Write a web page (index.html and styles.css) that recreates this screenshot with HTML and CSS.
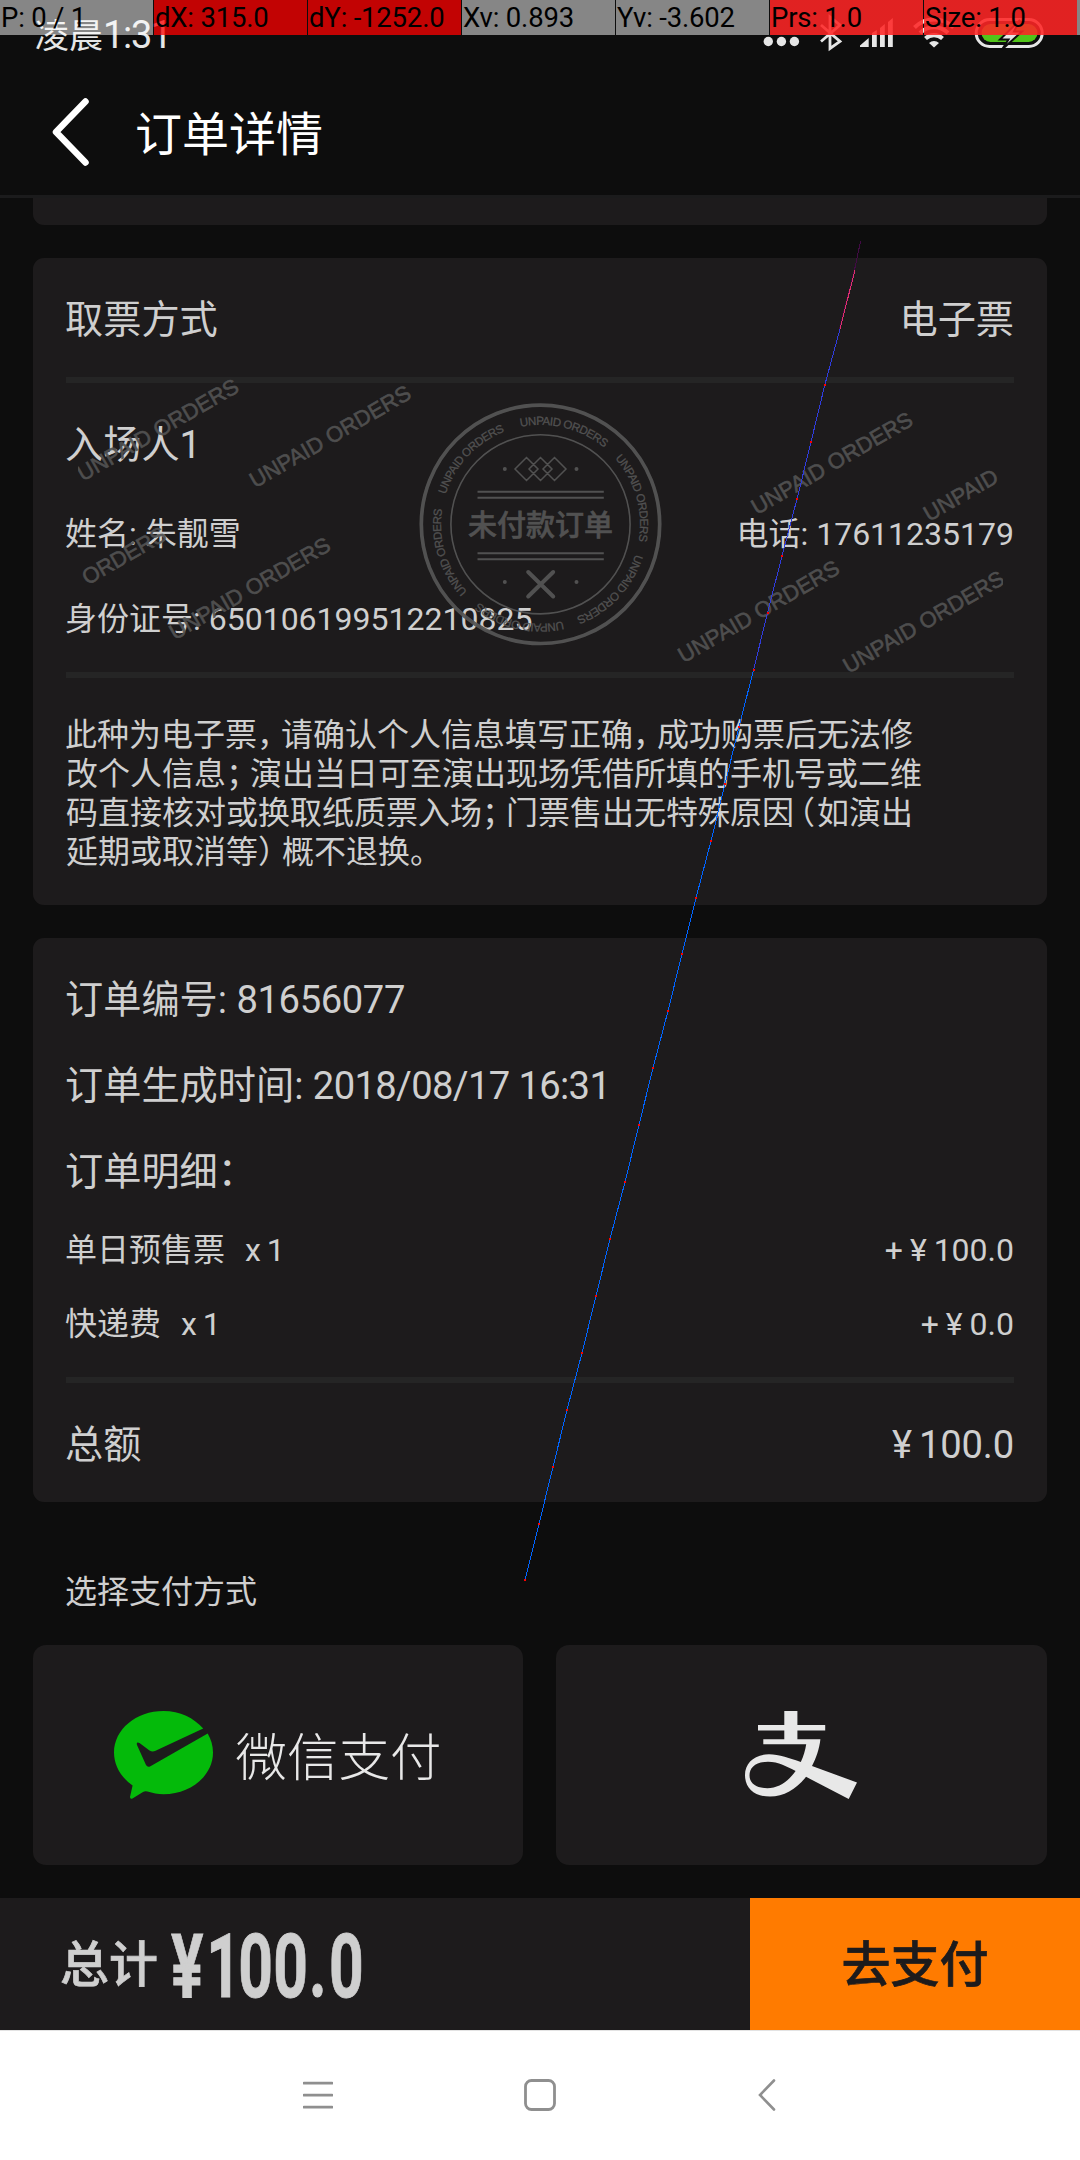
FILE: index.html
```html
<!DOCTYPE html>
<html lang="zh-CN">
<head>
<meta charset="utf-8">
<title>订单详情</title>
<link rel="stylesheet" href="styles.css">
</head>
<body>
<div class="phone">
  <header class="header">
    <div class="status">
      <div class="clock">凌晨<span class="clock-digits">1:31</span></div>
      <svg class="status-icons" width="290" height="60" viewBox="760 0 290 60">
        <g fill="#e6e6e6">
          <circle cx="768.3" cy="41.5" r="4.7"/><circle cx="781.4" cy="41.5" r="4.7"/><circle cx="794.4" cy="41.5" r="4.7"/>
          <path d="M860 47V45.500L868.700 38V47zM872 33l4.800-3V47H872zM880 28l4.800-4V47H880zM888 22l4.800-4V47H888z"/>
          <path d="M934 47.500l-5-4.500a7.500 7.500 0 0 1 10 0z"/>
        </g>
        <g fill="none" stroke="#e6e6e6">
          <path d="M821 25l19 16.500-10 7V17l10 8-19 16.500" stroke-width="2.800"/>
          <path d="M925.500 38.500a12.500 12.500 0 0 1 17 0" stroke-width="4.200"/>
          <path d="M920 33a20 20 0 0 1 28 0M914.500 27.500a28 28 0 0 1 39 0" stroke-width="4"/>
          <rect x="976.200" y="19.500" width="66" height="27" rx="13.500" stroke-width="3"/>
        </g>
        <rect x="981.500" y="24" width="56" height="18" rx="9" fill="#52c41a"/>
        <path d="M1020 20l-20 19.500h8.500l-6.500 10 20-18h-8z" fill="#e6e6e6" stroke="#0d0d0d" stroke-width="2"/>
      </svg>
    </div>
    <div class="titlebar">
      <svg class="back" width="38" height="68" viewBox="0 0 38 68"><path d="M34.500 3.500L5 34l29.500 30.500" fill="none" stroke="#fff" stroke-width="6.500" stroke-linecap="round" stroke-linejoin="round"/></svg>
      <h1 class="title">订单详情</h1>
    </div>
  </header>

  <main class="content">
    <section class="card card-previous"></section>

    <section class="card ticket">
      <div class="row pickup"><span>取票方式</span><span>电子票</span></div>
      <div class="divider"></div>
      <div class="visitor">
        <div class="row visitor-title">入场人1</div>
        <div class="row small name"><span>姓名: 朱靓雪</span><span>电话: 17611235179</span></div>
        <div class="row small idcard">身份证号: 650106199512210825</div>
        <svg class="watermark" width="925" height="300" viewBox="77.500 372 925 300">
          <defs>
            <path id="ring" d="M0-99.500A99.500 99.500 0 0 1 0 99.500A99.500 99.500 0 0 1 0-99.500"/>
          </defs>
          <g class="mark-text">
            <text transform="translate(82.300 481.800) rotate(-30)" textLength="182">UNPAID ORDERS</text>
            <text transform="translate(254.500 488.500) rotate(-30)" textLength="182">UNPAID ORDERS</text>
            <text transform="translate(87 585.500) rotate(-30)" textLength="93">ORDERS</text>
            <text transform="translate(174.200 640.500) rotate(-30)" textLength="182">UNPAID ORDERS</text>
            <text transform="translate(756.300 515.200) rotate(-30)" textLength="182">UNPAID ORDERS</text>
            <text transform="translate(928.500 522) rotate(-30)" textLength="82">UNPAID</text>
            <text transform="translate(683 663.500) rotate(-30)" textLength="182">UNPAID ORDERS</text>
            <text transform="translate(847.900 674) rotate(-30)" textLength="182">UNPAID ORDERS</text>
          </g>
          <g fill="none" stroke="#555">
            <circle cx="540" cy="524.300" r="119.200" stroke-width="3.700"/>
            <circle cx="540" cy="524.300" r="89.600" stroke-width="1.600"/>
            <path d="M477 491.800H603.300M477 497.800H603.300M477 553.300H603.300M477 559.300H603.300" stroke-width="2"/>
            <path d="M526 457.500l11.500 11.500-11.500 11.500-11.500-11.500zM540 457.500l11.500 11.500-11.500 11.500-11.500-11.500zM554 457.500l11.500 11.500-11.500 11.500-11.500-11.500z" stroke-width="1.500"/>
            <path d="M527.700 572l25 24.500M552.700 572l-25 24.500" stroke-width="4" stroke-linecap="round"/>
          </g>
          <g fill="#555">
            <circle cx="504.300" cy="469" r="2"/><circle cx="576" cy="469" r="2"/>
            <circle cx="504.300" cy="582" r="2"/><circle cx="576" cy="582" r="2"/>
          </g>
          <text class="stamp-title" x="540" y="535.500" text-anchor="middle">未付款订单</text>
          <g class="ring-text" transform="translate(540 524.300) rotate(-11.500)">
            <text><textPath href="#ring" textLength="89">UNPAID ORDERS</textPath></text>
            <text transform="rotate(60)"><textPath href="#ring" textLength="89">UNPAID ORDERS</textPath></text>
            <text transform="rotate(119)"><textPath href="#ring" textLength="89">UNPAID ORDERS</textPath></text>
            <text transform="rotate(178.500)"><textPath href="#ring" textLength="89">UNPAID ORDERS</textPath></text>
            <text transform="rotate(239)"><textPath href="#ring" textLength="89">UNPAID ORDERS</textPath></text>
            <text transform="rotate(299)"><textPath href="#ring" textLength="89">UNPAID ORDERS</textPath></text>
          </g>
        </svg>
      </div>
      <div class="divider"></div>
      <p class="notice">此种为电子票<span class="p">，</span>请确认个人信息填写正确<span class="p">，</span>成功购票后无法修<br>改个人信息<span class="p">；</span>演出当日可至演出现场凭借所填的手机号或二维<br>码直接核对或换取纸质票入场<span class="p">；</span>门票售出无特殊原因<span class="open">（</span>如演出<br>延期或取消等<span class="p">）</span>概不退换。</p>
    </section>

    <section class="card order">
      <div class="row order-row"><span>订单编号: <span class="number">81656077</span></span></div>
      <div class="row order-row"><span>订单生成时间: <span class="date">2018/08/17 16:31</span></span></div>
      <div class="row order-row order-items-title">订单明细：</div>
      <div class="row small item"><span>单日预售票<span class="count">x 1</span></span><span class="price">+ ¥ 100.0</span></div>
      <div class="row small item"><span>快递费<span class="count">x 1</span></span><span class="price">+ ¥ 0.0</span></div>
      <div class="divider order-divider"></div>
      <div class="row sum"><span>总额</span><span class="sum-price">¥ 100.0</span></div>
    </section>

    <h2 class="pay-title">选择支付方式</h2>
    <div class="methods">
      <div class="card method">
        <svg width="99" height="88" viewBox="0 0 99 88"><path fill="#04ba0a" d="M89.200 17.600C80 7 66 0 49.500 0C22 0 0 18.600 0 41.500C0 54.500 7 66.500 18.600 74.400L16 86Q16 88.500 18.500 87.500L29 81Q31 80 33.500 80.600C38.500 82.300 44 83.200 49.500 83.200C77 83.200 99 64.500 99 41.500C99 34.800 97 28.300 93.700 22.600L36 55.400Q33.500 56.600 32 54L23 34Q22 30.500 25.500 32L35.500 39.500Q38.200 41 41 40Z"/></svg>
        <span class="wechat-name">微信支付</span>
      </div>
      <div class="card method method-alipay">
        <svg width="112" height="88" viewBox="0 0 112 88"><path fill="#e8e8e8" fill-rule="evenodd" d="M39.300 0H52.400V13.900H80.200V19.500H52.400V28.300H75.400C74.300 38 71 47.500 67 55L112 71.500L103.700 88L61 65.800C52 77.500 39 85.600 25 85.600C9 85.600 0 77 0 64C0 52 9.500 43.300 24 43.300C34 43.300 45 47.500 55.800 51C58.500 45.500 60.300 39.500 61.200 33.300H18.300V28.300H39.300V19.500H13V13.900H39.300ZM50.600 60C42 55.500 33.500 50.700 23 50.700C11 50.700 4.500 56 4.500 64.500C4.500 72.500 11.500 77.200 22.400 77.200C34 77.200 43.500 70 50.600 60Z"/></svg>
      </div>
    </div>
  </main>

  <footer class="paybar">
    <div class="total">
      <span class="total-label">总计</span>
      <svg class="total-amount" width="200" height="80" viewBox="0 0 200 80"><text transform="translate(0 72) scale(.68 1)" x="0 52 99 150.500 203 232.500">¥100.0</text></svg>
    </div>
    <button class="pay">去支付</button>
  </footer>

  <nav class="nav">
    <svg width="30" height="32" viewBox="0 0 30 32"><path d="M1 4.200H29M1 16.200H29M1 28.200H29" stroke="#8f8f8f" stroke-width="2.800" stroke-linecap="round"/></svg>
    <svg width="32" height="32" viewBox="0 0 32 32"><rect x="1.500" y="1.500" width="29" height="29" rx="6" fill="none" stroke="#8f8f8f" stroke-width="2.800"/></svg>
    <svg width="18" height="32" viewBox="0 0 18 32"><path d="M16 1.500L2 16l14 14.500" fill="none" stroke="#8f8f8f" stroke-width="2.600" stroke-linecap="round"/></svg>
  </nav>

  <svg class="trace" width="1080" height="2160" viewBox="0 0 1080 2160" shape-rendering="crispEdges">
    <g fill="none" stroke-width="1">
      <path d="M860.600 241L854.500 270 839.500 329" stroke="#420a45"/>
      <path d="M855 270L840 329" stroke="#e0306e"/>
      <path d="M840 329L824.800 385 811 442 797 499 782 556 767.500 613 753.500 670" stroke="#303cdc"/>
      <path d="M753.500 670L739 727 725 784 711 841 696 898 682 954 668 1011 653 1068 639 1125 625 1182 610 1239 596 1296 582 1353 567 1410 553 1467 539 1524 525 1580" stroke="#0064ff"/>
    </g>
    <path fill="#f00" d="M824 384h2v2h-2zM810 441h2v2h-2zM796 498h2v2h-2zM781 555h2v2h-2zM767 612h2v2h-2zM753 669h2v2h-2zM738 726h2v2h-2zM724 783h2v2h-2zM710 840h2v2h-2zM695 897h2v2h-2zM681 953h2v2h-2zM667 1010h2v2h-2zM652 1067h2v2h-2zM638 1124h2v2h-2zM624 1181h2v2h-2zM609 1238h2v2h-2zM595 1295h2v2h-2zM581 1352h2v2h-2zM566 1409h2v2h-2zM552 1466h2v2h-2zM538 1523h2v2h-2zM524 1579h2v2h-2z"/>
  </svg>
  <div class="pointer-bar">
    <span>P: 0 / 1</span><span class="moved">dX: 315.0</span><span class="moved">dY: -1252.0</span><span>Xv: 0.893</span><span>Yv: -3.602</span><span class="level">Prs: 1.0</span><span class="level">Size: 1.0</span>
  </div>
</div>
</body>
</html>
```
FILE: styles.css
```css
* { box-sizing: border-box; }
body { margin: 0; background: #0d0d0d; }
.phone {
  position: relative;
  width: 1080px;
  height: 2160px;
  overflow: hidden;
  display: flex;
  flex-direction: column;
  background: #0d0d0d;
  color: #cfcfcf;
  font-family: Roboto, "Noto Sans CJK SC", sans-serif;
  font-size: 38.2px;
}
svg { display: block; flex: none; }

.header { height: 198px; border-bottom: 3px solid #1b1b1c; }
.status {
  height: 66px;
  padding: 0 30px 0 35px;
  display: flex;
  justify-content: space-between;
  color: #e6e6e6;
}
.clock { font-size: 34px; line-height: 71px; height: 66px; white-space: nowrap; }
.clock-digits { font-size: 38px; letter-spacing: -1.3px; }
.titlebar {
  height: 129px;
  padding-left: 51px;
  display: flex;
  align-items: flex-start;
  gap: 46px;
}
.back { margin-top: 32px; }
.title { margin: 0; font-size: 47px; font-weight: 400; line-height: 138px; color: #fff; }

.content { padding: 0 33px; height: 1700px; }
.card { background: #1d1b1c; border-radius: 11px; }
.card-previous { height: 27px; border-radius: 0 0 11px 11px; margin-bottom: 33px; }
.row { display: flex; justify-content: space-between; white-space: pre; }
.row > :first-child:not(:only-child), .visitor-title, .idcard, .order-row { text-indent: -1px; }
.small { font-size: 32px; }
.divider { height: 6px; background: #252525; }

.ticket { height: 647px; padding: 0 33px; margin-bottom: 33px; }
.pickup { height: 119px; line-height: 125px; }
.visitor { position: relative; height: 289px; padding-top: 18px; }
.visitor-title { height: 89px; line-height: 89px; }
.name { height: 89px; line-height: 89px; }
.idcard { height: 81px; line-height: 81px; }
.watermark { position: absolute; left: 11.5px; top: -11px; opacity: .94; }
.mark-text { fill: #525252; stroke: #525252; stroke-width: .6px; font: 22px "Liberation Sans", Arial, sans-serif; }
.ring-text { fill: #555; stroke: #555; stroke-width: .3px; font: 11.6px "Liberation Sans", Arial, sans-serif; }
.stamp-title { fill: #555; stroke: #555; stroke-width: .6px; font: 500 29px "Noto Sans CJK SC", sans-serif; }
.notice {
  margin: 0;
  padding-top: 35px;
  font: 32px/39px "Noto Sans CJK SC", sans-serif;
  text-indent: -1px;
  white-space: nowrap;
}
.p { margin: 0 -8px 0 0; }
.open { margin-left: -11px; margin-right: 2px; }

.order { height: 564px; padding: 19px 33px 0; }
.order-row { height: 86px; line-height: 86px; }
.number { letter-spacing: -.4px; }
.date { letter-spacing: -.65px; }
.order-items-title { height: 84px; }
.item { height: 74px; line-height: 74px; }
.count { margin-left: 20px; word-spacing: -2px; }
.price { word-spacing: -1px; }
.sum-price { word-spacing: -2px; letter-spacing: -.2px; }
.order-divider { margin-top: 16px; }
.sum { height: 119px; line-height: 124px; }

.pay-title { margin: 0; padding-left: 32px; height: 143px; font-size: 32px; font-weight: 400; line-height: 180px; }
.methods { display: grid; grid-template-columns: 490px 491px; gap: 33px; height: 220px; }
.method { display: flex; align-items: center; justify-content: center; border-radius: 13px; }
.method-alipay { padding-right: 2px; }
.wechat-name { margin-left: 22px; font: 300 51.5px/80px "Noto Sans CJK SC", sans-serif; color: #e8e8e8; padding-bottom: 3px; }

.paybar { height: 132px; display: flex; background: #1d1b1c; }
.total { flex: 1; display: flex; padding-left: 60px; }
.total-label { width: 111px; font-size: 49px; font-weight: 500; line-height: 136px; -webkit-text-stroke: .7px #cfcfcf; }
.total-amount { margin-top: 27px; }
.total-amount text { font: 700 89px Roboto, sans-serif; fill: #cfcfcf; stroke: #cfcfcf; stroke-width: .8px; }
.pay {
  width: 330px;
  padding: 0;
  border: 0;
  background: #ff7b00;
  color: #1d1b1c;
  font: 500 49px/136px Roboto, "Noto Sans CJK SC", sans-serif;
  -webkit-text-stroke: .7px #1d1b1c;
}
.nav {
  height: 130px;
  padding: 48px 304px 0 303px;
  border-top: 1px solid #e3e3e3;
  background: #fff;
  display: grid;
  grid-template-columns: 221px 234px 18px;
}

.trace { position: absolute; left: 0; top: 0; }
.pointer-bar {
  position: absolute;
  inset: 0 0 auto;
  height: 35px;
  display: grid;
  grid-template-columns: repeat(6, 153px) 156px;
  column-gap: 1px;
  font-size: 27.5px;
  line-height: 35px;
  letter-spacing: -.2px;
  color: #000;
}
.pointer-bar span { padding-left: 1px; white-space: pre; background: rgba(255, 255, 255, .5); }
.pointer-bar .moved { background: rgba(255, 0, 0, .75); }
.pointer-bar .level {
  background: linear-gradient(rgba(255, 0, 0, .75), rgba(255, 0, 0, .75)) 0 0 / 153px 100% no-repeat, rgba(255, 255, 255, .5);
}
```
